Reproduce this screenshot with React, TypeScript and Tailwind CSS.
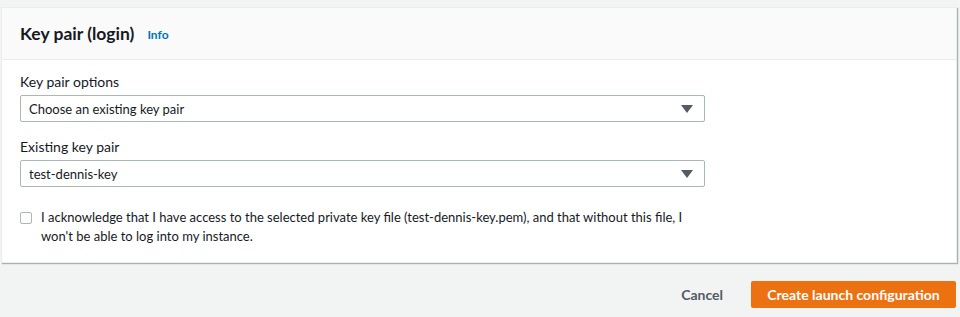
import React from 'react';

const Caret = () => (
    <svg className="w-[12px] h-[8px] text-[#545b64]" viewBox="0 0 12 8" fill="currentColor">
        <path d="M0 0h12L6 8z" />
    </svg>
);

const SelectBox: React.FC<{ value: string }> = ({ value }) => (
    <div className="w-[685px] h-[27px] border border-[#aab7b8] rounded-[2px] bg-white flex items-center justify-between pl-[8px] pr-[11px]">
        <span className="text-[13px] leading-[20px] text-[#16191f]">{value}</span>
        <Caret />
    </div>
);

const App: React.FC = () => {
    return (
        <div className="w-[960px] h-[317px] bg-[#f2f3f3] pt-[7px] font-['Lato',sans-serif] text-[#16191f]">
            {/* Card */}
            <div className="ml-[1px] w-[956px] bg-white border border-[#eaeded] shadow-[1px_1px_1px_0_rgba(0,28,36,0.3)]">
                <div className="h-[52px] bg-[#fafafa] border-b border-[#eaeded] flex items-center px-[18px]">
                    <h2 className="text-[17.5px] font-bold leading-[24px]">Key pair (login)</h2>
                    <span className="ml-[13px] mt-[2px] text-[12px] font-bold text-[#0073bb]">Info</span>
                </div>

                <div className="px-[18px] pt-[12px] pb-[16px]">
                    <div className="text-[14px] leading-[20px] mb-[3px]">Key pair options</div>
                    <SelectBox value="Choose an existing key pair" />

                    <div className="text-[14px] leading-[20px] mt-[15px] mb-[3px]">Existing key pair</div>
                    <SelectBox value="test-dennis-key" />

                    <div className="flex items-start mt-[21px]">
                        <div className="w-[12px] h-[12px] mt-[4px] border border-[#aab7b8] rounded-[2px] bg-white shrink-0" />
                        <p className="ml-[9px] text-[13px] leading-[19px] w-[645px]">
                            I acknowledge that I have access to the selected private key file (test-dennis-key.pem), and that without this file, I won't be able to log into my instance.
                        </p>
                    </div>
                </div>
            </div>

            {/* Actions */}
            <div className="flex justify-end items-center mt-[18px] pr-[4px]">
                <button className="text-[14px] font-bold text-[#545b64] mr-[28px]">Cancel</button>
                <button className="w-[205px] h-[27px] bg-[#ec7211] text-white text-[14px] font-bold rounded-[2px]">
                    Create launch configuration
                </button>
            </div>
        </div>
    );
};

export default App;
